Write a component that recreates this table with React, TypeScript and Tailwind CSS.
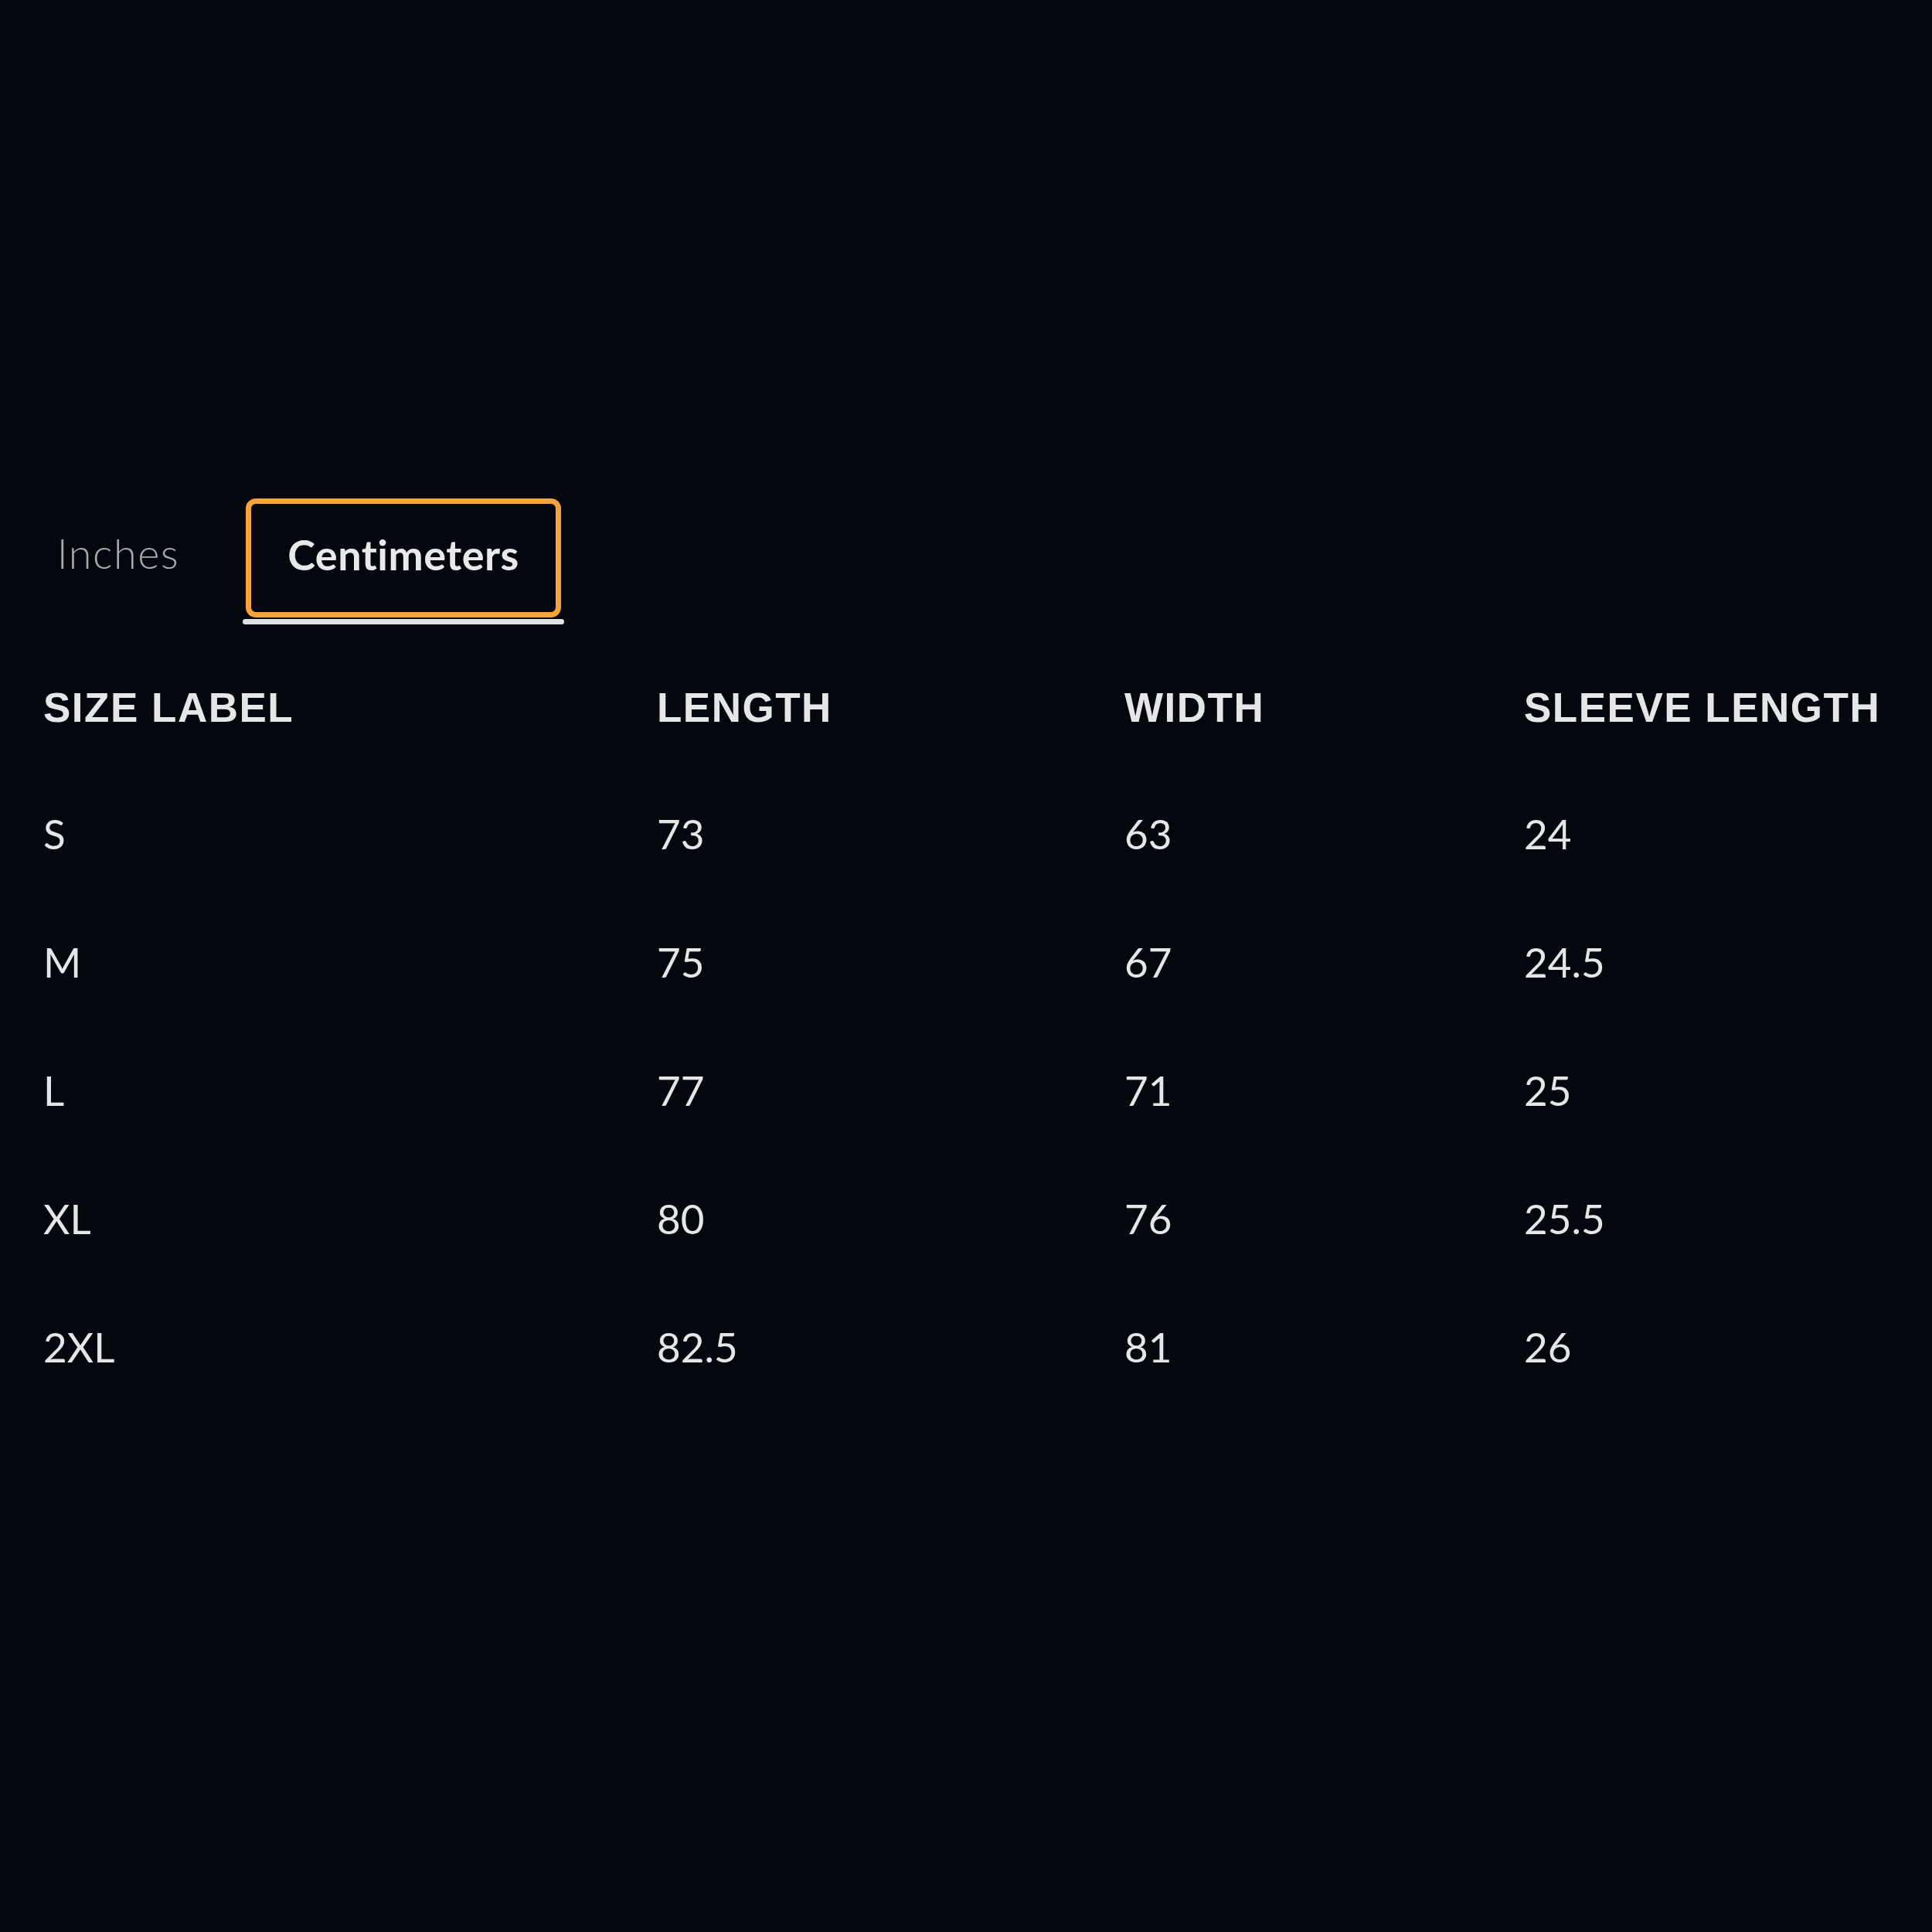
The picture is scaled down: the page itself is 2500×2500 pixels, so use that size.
import React from "react";

const rows = [
  { size: "S", length: "73", width: "63", sleeve: "24" },
  { size: "M", length: "75", width: "67", sleeve: "24.5" },
  { size: "L", length: "77", width: "71", sleeve: "25" },
  { size: "XL", length: "80", width: "76", sleeve: "25.5" },
  { size: "2XL", length: "82.5", width: "81", sleeve: "26" },
];

const headers = ["SIZE LABEL", "LENGTH", "WIDTH", "SLEEVE LENGTH"];

export default function App() {
  return (
    <div className="w-[2500px] h-[2500px] bg-[#05070e] pt-[645px] font-['Lato','Noto_Sans',sans-serif] [font-variant-ligatures:none]">
      {/* tabs */}
      <div className="flex items-start pl-[24px]">
        <button className="w-[258px] h-[153px] pb-[12px] flex items-center justify-center text-[54px] leading-none font-light tracking-[1.5px] text-[#a9a9ab]">
          Inches
        </button>
        <div className="ml-[32px] w-[416px] flex flex-col">
          <button className="mx-[4px] h-[154px] pb-[8px] border-[7px] border-[#f5a33a] rounded-[13px] flex items-center justify-center text-[54px] leading-none font-bold tracking-[0.5px] text-[#e9e9eb]">
            Centimeters
          </button>
          <div className="mt-[2px] h-[7px] rounded-full bg-[#e2e2e4]" />
        </div>
      </div>

      {/* table */}
      <div className="mt-[24px] px-[56px]">
        <div className="grid grid-cols-[794px_605px_517px_1fr] h-[166px] items-center font-['Liberation_Sans',Arial,sans-serif] font-bold text-[53px] leading-none tracking-[1.5px] text-[#e6e6e8]">
          {headers.map((h) => (
            <div key={h}>{h}</div>
          ))}
        </div>
        {rows.map((r) => (
          <div
            key={r.size}
            className="grid grid-cols-[794px_605px_517px_1fr] h-[166px] pb-[6px] items-center text-[53px] leading-none text-[#e6e6e8]"
          >
            <div>{r.size}</div>
            <div>{r.length}</div>
            <div>{r.width}</div>
            <div>{r.sleeve}</div>
          </div>
        ))}
      </div>
    </div>
  );
}
